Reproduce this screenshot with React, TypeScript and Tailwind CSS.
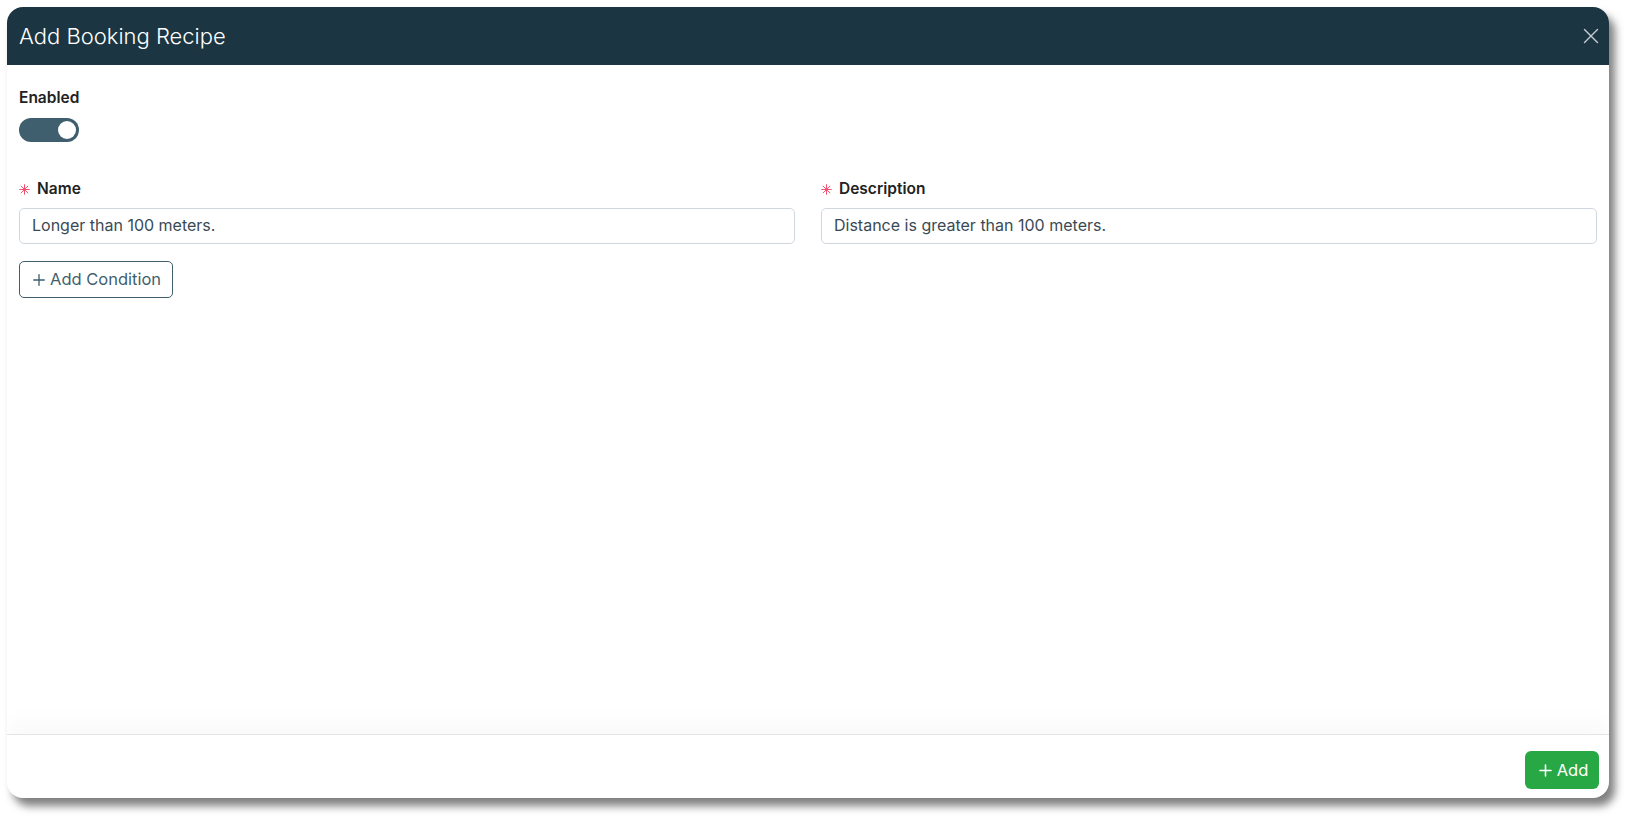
import { X, Plus } from 'lucide-react'

function Asterisk() {
  return (
    <svg width="11" height="11" viewBox="0 0 10 10" className="mr-[7px]" stroke="#f0506e" strokeWidth="0.9" strokeLinecap="round">
      <line x1="0.6" y1="5" x2="9.4" y2="5" />
      <line x1="5" y1="0.6" x2="5" y2="9.4" />
      <line x1="1.9" y1="1.9" x2="8.1" y2="8.1" />
      <line x1="8.1" y1="1.9" x2="1.9" y2="8.1" />
    </svg>
  )
}

function Field({ label, value }: { label: string; value: string }) {
  return (
    <div className="flex-1">
      <div className="flex items-center h-5 mb-[9px]">
        <Asterisk />
        <span className="text-[15.5px] font-semibold text-[#222]">{label}</span>
      </div>
      <div className="h-[36px] border border-[#cfd6dd] rounded-[5px] flex items-center pb-[2px] px-[12px] text-[16px] text-[#3a4a55]">
        {value}
      </div>
    </div>
  )
}

export default function App() {
  return (
    <div className="w-[1632px] h-[822px] bg-white p-[7px]" style={{ fontFamily: 'Inter, "Noto Sans", sans-serif' }}>
      <div className="w-[1602px] h-[791px] bg-white rounded-[16px] flex flex-col overflow-hidden shadow-[6px_8px_9px_rgba(0,0,0,0.5)]">
        <div className="h-[58px] bg-[#1b3542] flex items-center justify-between pl-[12px] pr-[5px] shrink-0">
          <h1 className="text-white text-[22px] font-light">Add Booking Recipe</h1>
          <X className="w-[26px] h-[26px] text-[#c5ccd1]" strokeWidth={1.3} />
        </div>
        <div className="flex-1 px-[12px] pt-[23px]">
          <div className="text-[15.5px] font-semibold text-[#222] h-[20px] leading-[20px]">Enabled</div>
          <div className="mt-[10px] w-[60px] h-[24px] rounded-full bg-[#3f5f6e] flex items-center justify-end pr-[3px]">
            <div className="w-[18px] h-[18px] rounded-full bg-white" />
          </div>
          <div className="flex gap-[26px] mt-[37px]">
            <Field label="Name" value="Longer than 100 meters." />
            <Field label="Description" value="Distance is greater than 100 meters." />
          </div>
          <button className="mt-[17px] h-[37px] pl-[10px] pr-[11px] border border-[#3f5f6e] rounded-[5px] text-[#3f5f6e] text-[16.5px] flex items-center gap-[2px]">
            <Plus className="w-[18px] h-[18px]" strokeWidth={1.8} />
            Add Condition
          </button>
        </div>
        <div className="h-[64px] border-t border-[#e4e4e4] flex items-start justify-end pt-[16px] pr-[10px] shrink-0 shadow-[0_-14px_20px_rgba(0,0,0,0.025)]">
          <button className="h-[38px] w-[74px] bg-[#28a745] rounded-[6px] text-white text-[16.5px] flex items-center justify-center gap-[2px]">
            <Plus className="w-[19px] h-[19px]" strokeWidth={2} />
            Add
          </button>
        </div>
      </div>
    </div>
  )
}
